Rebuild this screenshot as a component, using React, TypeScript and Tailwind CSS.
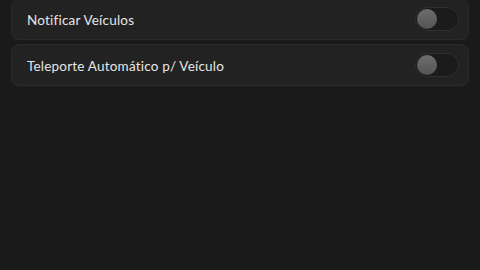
import React, { useState } from "react";

type Setting = {
  id: string;
  label: string;
};

const settings: Setting[] = [
  { id: "notify", label: "Notificar Veículos" },
  { id: "teleport", label: "Teleporte Automático p/ Veículo" },
];

function Toggle({ on, onChange }: { on: boolean; onChange: () => void }) {
  return (
    <button
      onClick={onChange}
      className="relative w-[44px] h-[24px] rounded-full bg-[#1b1b1b] border border-[#2f2f2f] shrink-0"
    >
      <span
        className={
          "absolute top-[1px] w-[20px] h-[20px] rounded-full bg-gradient-to-b from-[#6e6e6e] to-[#545454] " +
          (on ? "left-[21px]" : "left-[1px]")
        }
      />
    </button>
  );
}

export default function App() {
  const [state, setState] = useState<Record<string, boolean>>({});

  return (
    <div
      className="w-[480px] h-[270px] bg-[#1a1a1a] overflow-hidden px-[11px]"
      style={{ fontFamily: "Lato, 'Open Sans', sans-serif" }}
    >
      <div className="flex flex-col gap-[4px] -mt-[2px]">
        {settings.map((s) => (
          <div
            key={s.id}
            className="h-[42px] flex items-center justify-between pl-[15px] pr-[9px] rounded-[8px] bg-[#222222] border border-[#2b2b2b]"
          >
            <span className="pt-[2px] text-[13.5px] text-[#e6e6e6] tracking-[0.2px]">
              {s.label}
            </span>
            <Toggle
              on={!!state[s.id]}
              onChange={() => setState({ ...state, [s.id]: !state[s.id] })}
            />
          </div>
        ))}
      </div>
    </div>
  );
}
